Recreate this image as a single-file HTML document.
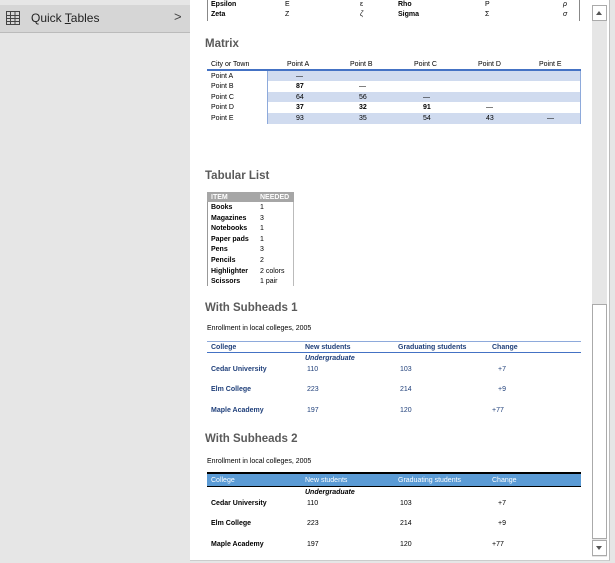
<!DOCTYPE html><html><head><style>
*{margin:0;padding:0;box-sizing:border-box}
body{width:615px;height:563px;overflow:hidden;background:#e6e6e6;font-family:"Liberation Sans",sans-serif;position:relative}
.a{position:absolute;white-space:nowrap}
.s{font-size:7px;color:#000;line-height:9px}
.b{font-weight:bold}
.h{font-size:11.5px;font-weight:bold;color:#5a5a5a}
.bl{color:#1f3f7a;font-weight:bold}
</style></head><body>
<div class="a" style="left:0;top:5px;width:190px;height:28px;background:#d6d6d6;border-bottom:1px solid #bbb"></div>
<svg class="a" style="left:6px;top:11px" width="14" height="14"><rect x="0.5" y="0.5" width="13" height="13" fill="none" stroke="#444"/><path d="M0.5 4.5H13.5M0.5 7.5H13.5M0.5 10.5H13.5M4.5 0.5V13.5M9 0.5V13.5" stroke="#444" fill="none"/></svg>
<div class="a" style="left:31px;top:11px;font-size:12px;color:#222">Quick <u>T</u>ables</div>
<div class="a" style="left:174px;top:9px;font-size:13px;color:#444">&gt;</div>
<div class="a" style="left:190px;top:0;width:420px;height:561px;background:#fff;border-right:1px solid #bbb;border-bottom:1px solid #ccc"></div>
<div class="a" style="left:592px;top:5px;width:15px;height:552px;background:#e6e6e6"></div>
<div class="a" style="left:592px;top:5px;width:15px;height:16px;background:#fff;border:1px solid #aaa"></div>
<div class="a" style="left:596px;top:11px;width:0;height:0;border-left:3.5px solid transparent;border-right:3.5px solid transparent;border-bottom:4px solid #555"></div>
<div class="a" style="left:592px;top:304px;width:15px;height:235px;background:#fff;border:1px solid #aaa"></div>
<div class="a" style="left:592px;top:540px;width:15px;height:16px;background:#fff;border:1px solid #aaa"></div>
<div class="a" style="left:596px;top:546px;width:0;height:0;border-left:3.5px solid transparent;border-right:3.5px solid transparent;border-top:4px solid #555"></div>
<div class="a" style="left:207px;top:0;width:1px;height:21px;background:#888"></div>
<div class="a" style="left:579px;top:0;width:1px;height:21px;background:#888"></div>
<div class="s b a" style="left:211px;top:0px">Epsilon</div><div class="s a" style="left:285px;top:0">Ε</div><div class="s a" style="left:360px;top:0">ε</div><div class="s b a" style="left:398px;top:0">Rho</div><div class="s a" style="left:485px;top:0">Ρ</div><div class="s a" style="left:563px;top:0"><i>ρ</i></div>
<div class="s b a" style="left:211px;top:10px">Zeta</div><div class="s a" style="left:285px;top:10px">Ζ</div><div class="s a" style="left:360px;top:10px"><i>ζ</i></div><div class="s b a" style="left:398px;top:10px">Sigma</div><div class="s a" style="left:485px;top:10px">Σ</div><div class="s a" style="left:563px;top:10px"><i>σ</i></div>
<div class="h a" style="left:205px;top:38px">Matrix</div>
<div class="s a" style="left:211px;top:60px">City or Town</div><div class="s a" style="left:287px;top:60px">Point A</div><div class="s a" style="left:350px;top:60px">Point B</div><div class="s a" style="left:414px;top:60px">Point C</div><div class="s a" style="left:478px;top:60px">Point D</div><div class="s a" style="left:539px;top:60px">Point E</div>
<div class="a" style="left:207px;top:69px;width:374px;height:2px;background:#4472c4"></div>
<div class="a" style="left:267px;top:71px;width:314px;height:53px;border-left:1px solid #8eaadb;border-right:1px solid #8eaadb"></div>
<div class="a" style="left:268px;top:71px;width:312px;height:10px;background:#d0dbef"></div>
<div class="a" style="left:268px;top:92px;width:312px;height:10px;background:#d0dbef"></div>
<div class="a" style="left:268px;top:113px;width:312px;height:11px;background:#d0dbef"></div>
<div class="s a" style="left:211px;top:72px">Point A</div><div class="s a" style="left:296px;top:72px">—</div>
<div class="s a" style="left:211px;top:82px">Point B</div><div class="s b a" style="left:296px;top:82px">87</div><div class="s a" style="left:359px;top:82px">—</div>
<div class="s a" style="left:211px;top:93px">Point C</div><div class="s a" style="left:296px;top:93px">64</div><div class="s a" style="left:359px;top:93px">56</div><div class="s a" style="left:423px;top:93px">—</div>
<div class="s a" style="left:211px;top:103px">Point D</div><div class="s b a" style="left:296px;top:103px">37</div><div class="s b a" style="left:359px;top:103px">32</div><div class="s b a" style="left:423px;top:103px">91</div><div class="s a" style="left:486px;top:103px">—</div>
<div class="s a" style="left:211px;top:114px">Point E</div><div class="s a" style="left:296px;top:114px">93</div><div class="s a" style="left:359px;top:114px">35</div><div class="s a" style="left:423px;top:114px">54</div><div class="s a" style="left:486px;top:114px">43</div><div class="s a" style="left:547px;top:114px">—</div>
<div class="h a" style="left:205px;top:170px">Tabular List</div>
<div class="a" style="left:207px;top:192px;width:87px;height:10px;background:#a6a6a6"></div>
<div class="a" style="left:207px;top:202px;width:87px;height:84px;border-left:1px solid #999;border-right:1px solid #bbb"></div>
<div class="s b a" style="left:211px;top:193px;color:#fff">ITEM</div><div class="s b a" style="left:260px;top:193px;color:#fff">NEEDED</div>
<div class="s b a" style="left:211px;top:203px;line-height:10.6px">Books<br>Magazines<br>Notebooks<br>Paper pads<br>Pens<br>Pencils<br>Highlighter<br>Scissors</div>
<div class="s a" style="left:260px;top:203px;line-height:10.6px">1<br>3<br>1<br>1<br>3<br>2<br>2 colors<br>1 pair</div>
<div class="h a" style="left:205px;top:302px">With Subheads 1</div>
<div class="s a" style="left:207px;top:324px">Enrollment in local colleges, 2005</div>
<div class="a" style="left:207px;top:341px;width:374px;height:1px;background:#8eaadb"></div>
<div class="a" style="left:207px;top:352px;width:374px;height:1px;background:#4472c4"></div>
<div class="s a bl" style="left:211px;top:343px">College</div><div class="s a bl" style="left:305px;top:343px">New students</div><div class="s a bl" style="left:398px;top:343px">Graduating students</div><div class="s a bl" style="left:492px;top:343px">Change</div>
<div class="s a bl" style="left:305px;top:354px;font-style:italic">Undergraduate</div>
<div class="s a bl" style="left:211px;top:365px">Cedar University</div><div class="s a bl" style="left:307px;top:365px;font-weight:normal">110</div><div class="s a bl" style="left:400px;top:365px;font-weight:normal">103</div><div class="s a bl" style="left:498px;top:365px;font-weight:normal">+7</div>
<div class="s a bl" style="left:211px;top:385px">Elm College</div><div class="s a bl" style="left:307px;top:385px;font-weight:normal">223</div><div class="s a bl" style="left:400px;top:385px;font-weight:normal">214</div><div class="s a bl" style="left:498px;top:385px;font-weight:normal">+9</div>
<div class="s a bl" style="left:211px;top:406px">Maple Academy</div><div class="s a bl" style="left:307px;top:406px;font-weight:normal">197</div><div class="s a bl" style="left:400px;top:406px;font-weight:normal">120</div><div class="s a bl" style="left:492px;top:406px;font-weight:normal">+77</div>
<div class="h a" style="left:205px;top:433px">With Subheads 2</div>
<div class="s a" style="left:207px;top:457px">Enrollment in local colleges, 2005</div>
<div class="a" style="left:207px;top:472px;width:374px;height:2px;background:#000"></div>
<div class="a" style="left:207px;top:474px;width:374px;height:12px;background:#5b9bd5"></div>
<div class="a" style="left:207px;top:486px;width:374px;height:1px;background:#000"></div>
<div class="s a" style="left:211px;top:476px;color:#fff">College</div><div class="s a" style="left:305px;top:476px;color:#fff">New students</div><div class="s a" style="left:398px;top:476px;color:#fff">Graduating students</div><div class="s a" style="left:492px;top:476px;color:#fff">Change</div>
<div class="s a b" style="left:305px;top:488px;font-style:italic">Undergraduate</div>
<div class="s a b" style="left:211px;top:499px">Cedar University</div><div class="s a" style="left:307px;top:499px">110</div><div class="s a" style="left:400px;top:499px">103</div><div class="s a" style="left:498px;top:499px">+7</div>
<div class="s a b" style="left:211px;top:519px">Elm College</div><div class="s a" style="left:307px;top:519px">223</div><div class="s a" style="left:400px;top:519px">214</div><div class="s a" style="left:498px;top:519px">+9</div>
<div class="s a b" style="left:211px;top:540px">Maple Academy</div><div class="s a" style="left:307px;top:540px">197</div><div class="s a" style="left:400px;top:540px">120</div><div class="s a" style="left:492px;top:540px">+77</div>
</body></html>
